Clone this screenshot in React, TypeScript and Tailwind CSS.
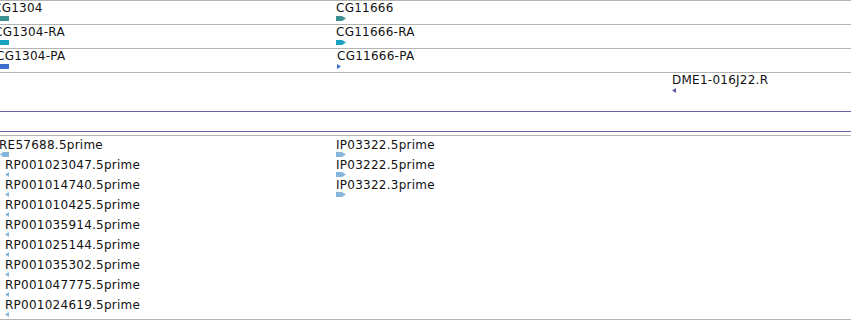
import React from "react";

type Shape = "bar" | "arrowR" | "arrowL" | "triR" | "triL";

function Glyph({ shape, color }: { shape: Shape; color: string }) {
  if (shape === "bar") {
    return <div className="w-[9px] h-[5px]" style={{ backgroundColor: color }} />;
  }
  const w = shape === "triR" || shape === "triL" ? 4 : 10;
  const pts: Record<string, string> = {
    arrowR: "0,0 6,0 10,2.5 6,5 0,5",
    arrowL: "0,2.5 3,0 9,0 9,5 3,5",
    triR: "0,0 4,2.5 0,5",
    triL: "4,0 0,2.5 4,5",
  };
  return (
    <svg width={w} height={5} viewBox={`0 0 ${w} 5`} className="block">
      <polygon points={pts[shape]} fill={color} />
    </svg>
  );
}

function Feature({
  label,
  shape,
  color,
  className = "",
  labelClass = "",
  tight = false,
}: {
  label: string;
  shape: Shape;
  color: string;
  className?: string;
  labelClass?: string;
  tight?: boolean;
}) {
  return (
    <div className={`flex flex-col ${className}`}>
      <span className={`whitespace-nowrap ${tight ? "leading-[14px]" : "leading-[15px]"} ${labelClass}`}>
        {label}
      </span>
      <Glyph shape={shape} color={color} />
    </div>
  );
}

const transcriptRows = [
  { left: "CG1304", leftOff: "ml-[-7px]", right: "CG11666", rightShape: "arrowR" as Shape, color: "#3d9094" },
  { left: "CG1304-RA", leftOff: "ml-[-6px]", right: "CG11666-RA", rightShape: "arrowR" as Shape, color: "#19a3c1" },
  { left: "CG1304-PA", leftOff: "ml-[-4px]", right: "CG11666-PA", rightShape: "triR" as Shape, color: "#3a6dcf" },
];

const leftEsts = [
  "RP001023047.5prime",
  "RP001014740.5prime",
  "RP001010425.5prime",
  "RP001035914.5prime",
  "RP001025144.5prime",
  "RP001035302.5prime",
  "RP001047775.5prime",
  "RP001024619.5prime",
];

const rightEsts = ["IP03322.5prime", "IP03222.5prime", "IP03322.3prime"];

const EST = "#86b5dc";

export default function App() {
  return (
    <div
      className="w-[851px] h-[320px] overflow-hidden bg-white text-[12px] tracking-[0.25px] text-[#111]"
      style={{ fontFamily: '"DejaVu Sans", Verdana, sans-serif' }}
    >
      <div className="border-t border-[#b4b4b4]" />
      {transcriptRows.map((r) => (
        <div key={r.left} className="flex h-[24px] border-b border-[#b4b4b4]">
          <div className="w-[336px] shrink-0 overflow-hidden">
            <Feature label={r.left} shape="bar" color={r.color} labelClass={r.leftOff} />
          </div>
          <Feature
            label={r.right}
            shape={r.rightShape}
            color={r.color}
            className={r.rightShape === "triR" ? "ml-[1px]" : ""}
          />
        </div>
      ))}
      <div className="h-[39px] border-b border-[#6e5fa6] pl-[672px]">
        <Feature label="DME1-016J22.R" shape="triL" color="#6b54ae" />
      </div>
      <div className="h-[20px] border-b border-[#6e5fa6]" />
      <div className="h-[4px] border-b border-[#b4b4b4]" />
      <div className="flex h-[184px] border-b border-[#b4b4b4] pt-[2px]">
        <div className="w-[336px] shrink-0 flex flex-col gap-[1px] overflow-hidden">
          <Feature label="RE57688.5prime" shape="arrowL" color={EST} labelClass="ml-[-1px]" tight />
          {leftEsts.map((l) => (
            <Feature key={l} label={l} shape="triL" color={EST} className="ml-[5px]" tight />
          ))}
        </div>
        <div className="flex flex-col gap-[1px]">
          {rightEsts.map((l) => (
            <Feature key={l} label={l} shape="arrowR" color={EST} tight />
          ))}
        </div>
      </div>
    </div>
  );
}
